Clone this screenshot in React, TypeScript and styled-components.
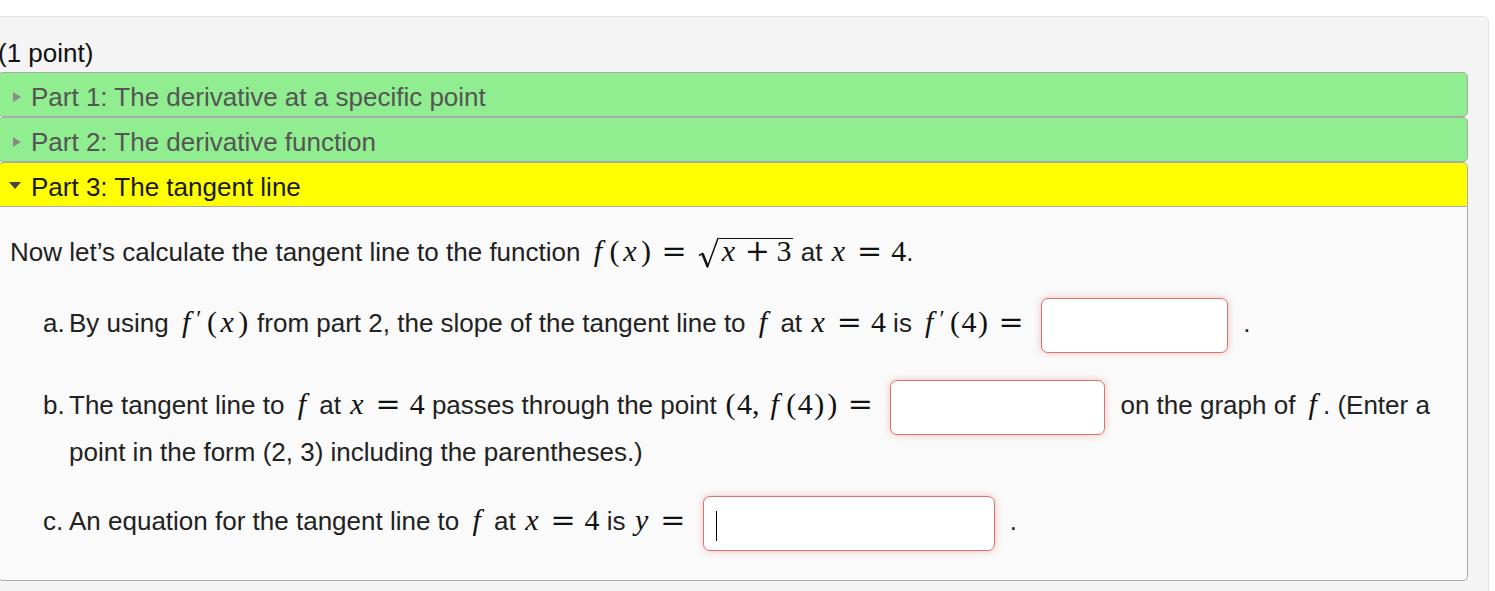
import React from "react";
import styled, { createGlobalStyle } from "styled-components";

const GlobalStyle = createGlobalStyle`
  html, body {
    margin: 0;
    padding: 0;
    background: #ffffff;
  }
  body {
    font-family: "Liberation Sans", Arial, sans-serif;
    color: #222222;
    overflow: hidden;
  }
`;

const Page = styled.div`
  box-sizing: border-box;
  width: 1495px;
  height: 591px;
  padding-top: 16px;
  overflow: hidden;
`;

const ProblemPanel = styled.div`
  margin: 0 6px 0 -23px;
  padding: 19px 20px 20px 20px;
  background: #f4f4f4;
  border: 1px solid #e4e4e4;
  border-radius: 6px;
  font-size: 26px;
  line-height: 34px;
`;

const Points = styled.div`
  color: #111111;
`;

const Accordion = styled.div`
  margin-top: 2px;
`;

type Tone = "done" | "open";

const SectionHeader = styled.div<{ $tone: Tone }>`
  box-sizing: border-box;
  display: flex;
  align-items: center;
  height: 45px;
  padding: 5px 10px 0 9px;
  line-height: 38px;
  border: 1px solid #aaaaaa;
  border-radius: ${(p) => (p.$tone === "open" ? "5px 5px 0 0" : "5px")};
  background: ${(p) => (p.$tone === "open" ? "#ffff00" : "#90ee90")};
  color: ${(p) => (p.$tone === "open" ? "#1a1a1a" : "#555555")};
`;

const Caret = styled.span<{ $open?: boolean }>`
  flex: none;
  box-sizing: border-box;
  width: 23px;
  display: flex;
  align-items: center;
  padding-left: ${(p) => (p.$open ? "1px" : "5px")};
  margin-top: ${(p) => (p.$open ? "-4px" : "0")};

  &::before {
    content: "";
    width: 0;
    height: 0;
    ${(p) =>
      p.$open
        ? `border-left: 6.5px solid transparent;
           border-right: 6.5px solid transparent;
           border-top: 7px solid #444444;`
        : `border-top: 5.5px solid transparent;
           border-bottom: 5.5px solid transparent;
           border-left: 8px solid #8a8a8a;`}
  }
`;

const SectionBody = styled.div`
  background: #fafafa;
  border: 1px solid #aaaaaa;
  border-top: 0;
  border-radius: 0 0 5px 5px;
  padding: 28px 11px 29px 11px;
  color: #222222;
`;

const Intro = styled.p`
  margin: 0 0 29px 0;
`;

const Items = styled.ol`
  list-style: none;
  margin: 0;
  padding: 0 0 0 33px;
  display: flex;
  flex-direction: column;
  gap: 27px;
`;

const Item = styled.li`
  display: flex;
  align-items: baseline;
`;

const ItemLabel = styled.span`
  flex: none;
  width: 26px;
`;

const ItemText = styled.div`
  flex: 1;
  min-width: 0;
`;

/* math typesetting */
const MathExpr = styled.span`
  font-family: "Liberation Serif", "Times New Roman", serif;
  font-size: 30px;
  line-height: 1;
  white-space: nowrap;
  color: #111111;
`;

const MathVar = styled.i<{ $wide?: boolean }>`
  font-style: italic;
  padding: ${(p) => (p.$wide ? "0 0.2em 0 0.2em" : "0 0.1em 0 0.07em")};
`;

const Paren = styled.span`
  padding: 0 0.05em;
`;

const Prime = styled.span`
  font-size: 0.8em;
  padding: 0 0.16em 0 0;
  vertical-align: 0.25em;
`;

const Rel = styled.span`
  font-family: "DejaVu Serif", serif;
  font-weight: normal;
  margin: 0 0.3em;
`;

const Bin = styled.span`
  font-family: "DejaVu Serif", serif;
  margin: 0 0.222em;
`;

const Comma = styled.span`
  margin-right: 0.17em;
`;

const Surd = styled.svg`
  display: inline-block;
  width: 21px;
  height: 31px;
  vertical-align: -7px;
  margin-left: 2px;
`;

const Radicand = styled.span`
  display: inline-block;
  border-top: 1.5px solid #111111;
  padding: 0 2px 0 1px;
  line-height: 0.8;
`;

const AnswerSlot = styled.span<{ $w: number; $caret?: boolean }>`
  position: relative;
  display: inline-block;
  width: ${(p) => p.$w}px;
  height: 55px;
  margin: 0 8px 0 1px;
  vertical-align: middle;

  &::after {
    content: "";
    display: ${(p) => (p.$caret ? "block" : "none")};
    position: absolute;
    left: 13px;
    top: 15px;
    width: 1px;
    height: 30px;
    background: #000000;
  }
`;

const AnswerField = styled.input`
  box-sizing: border-box;
  display: block;
  width: 100%;
  height: 100%;
  margin: 0;
  padding: 0 12px;
  border: 1px solid #d9736f;
  border-radius: 7px;
  background: #ffffff;
  box-shadow: 0 0 7px rgba(214, 80, 76, 0.35);
  font: inherit;
  outline: none;
`;

const F = () => <MathVar $wide>f</MathVar>;
const X = () => <MathVar>x</MathVar>;

function Answer({ width, caret }: { width: number; caret?: boolean }) {
  return (
    <AnswerSlot $w={width} $caret={caret}>
      <AnswerField type="text" readOnly aria-label="answer" />
    </AnswerSlot>
  );
}

function XEqualsFour() {
  return (
    <MathExpr>
      <X />
      <Rel>=</Rel>4
    </MathExpr>
  );
}

function SqrtXPlus3() {
  return (
    <>
      <Surd viewBox="0 0 21 31" aria-hidden="true">
        <path
          d="M1 18.5 L4.5 16.6 L9.6 29.6 L20.2 0.75"
          fill="none"
          stroke="#111111"
          strokeWidth="1.5"
          strokeLinejoin="miter"
        />
        <path d="M4.5 16.6 L9.6 29.6" stroke="#111111" strokeWidth="2.6" />
      </Surd>
      <Radicand>
        <X />
        <Bin>+</Bin>3
      </Radicand>
    </>
  );
}

export default function App() {
  return (
    <>
      <GlobalStyle />
      <Page>
        <ProblemPanel>
          <Points>(1 point)</Points>
          <Accordion>
            <SectionHeader $tone="done">
              <Caret />
              Part 1: The derivative at a specific point
            </SectionHeader>
            <SectionHeader $tone="done">
              <Caret />
              Part 2: The derivative function
            </SectionHeader>
            <SectionHeader $tone="open">
              <Caret $open />
              Part 3: The tangent line
            </SectionHeader>
            <SectionBody>
              <Intro>
                Now let’s calculate the tangent line to the function{" "}
                <MathExpr>
                  <F />
                  <Paren>(</Paren>
                  <X />
                  <Paren>)</Paren>
                  <Rel>=</Rel>
                  <SqrtXPlus3 />
                </MathExpr>{" "}
                at <XEqualsFour />.
              </Intro>
              <Items>
                <Item>
                  <ItemLabel>a.</ItemLabel>
                  <ItemText>
                    By using{" "}
                    <MathExpr>
                      <F />
                      <Prime>′</Prime>
                      <Paren>(</Paren>
                      <X />
                      <Paren>)</Paren>
                    </MathExpr>{" "}
                    from part 2, the slope of the tangent line to{" "}
                    <MathExpr>
                      <F />
                    </MathExpr>{" "}
                    at <XEqualsFour /> is{" "}
                    <MathExpr>
                      <F />
                      <Prime>′</Prime>
                      <Paren>(</Paren>4<Paren>)</Paren>
                      <Rel>=</Rel>
                    </MathExpr>{" "}
                    <Answer width={187} /> .
                  </ItemText>
                </Item>
                <Item>
                  <ItemLabel>b.</ItemLabel>
                  <ItemText>
                    The tangent line to{" "}
                    <MathExpr>
                      <F />
                    </MathExpr>{" "}
                    at <XEqualsFour /> passes through the point{" "}
                    <MathExpr>
                      <Paren>(</Paren>4<Comma>,</Comma>
                      <F />
                      <Paren>(</Paren>4<Paren>)</Paren>
                      <Paren>)</Paren>
                      <Rel>=</Rel>
                    </MathExpr>{" "}
                    <Answer width={215} /> on the graph of{" "}
                    <MathExpr>
                      <F />
                    </MathExpr>
                    . (Enter a point in the form (2, 3) including the
                    parentheses.)
                  </ItemText>
                </Item>
                <Item>
                  <ItemLabel>c.</ItemLabel>
                  <ItemText>
                    An equation for the tangent line to{" "}
                    <MathExpr>
                      <F />
                    </MathExpr>{" "}
                    at <XEqualsFour /> is{" "}
                    <MathExpr>
                      <MathVar>y</MathVar>
                      <Rel>=</Rel>
                    </MathExpr>{" "}
                    <Answer width={292} caret /> .
                  </ItemText>
                </Item>
              </Items>
            </SectionBody>
          </Accordion>
        </ProblemPanel>
      </Page>
    </>
  );
}
